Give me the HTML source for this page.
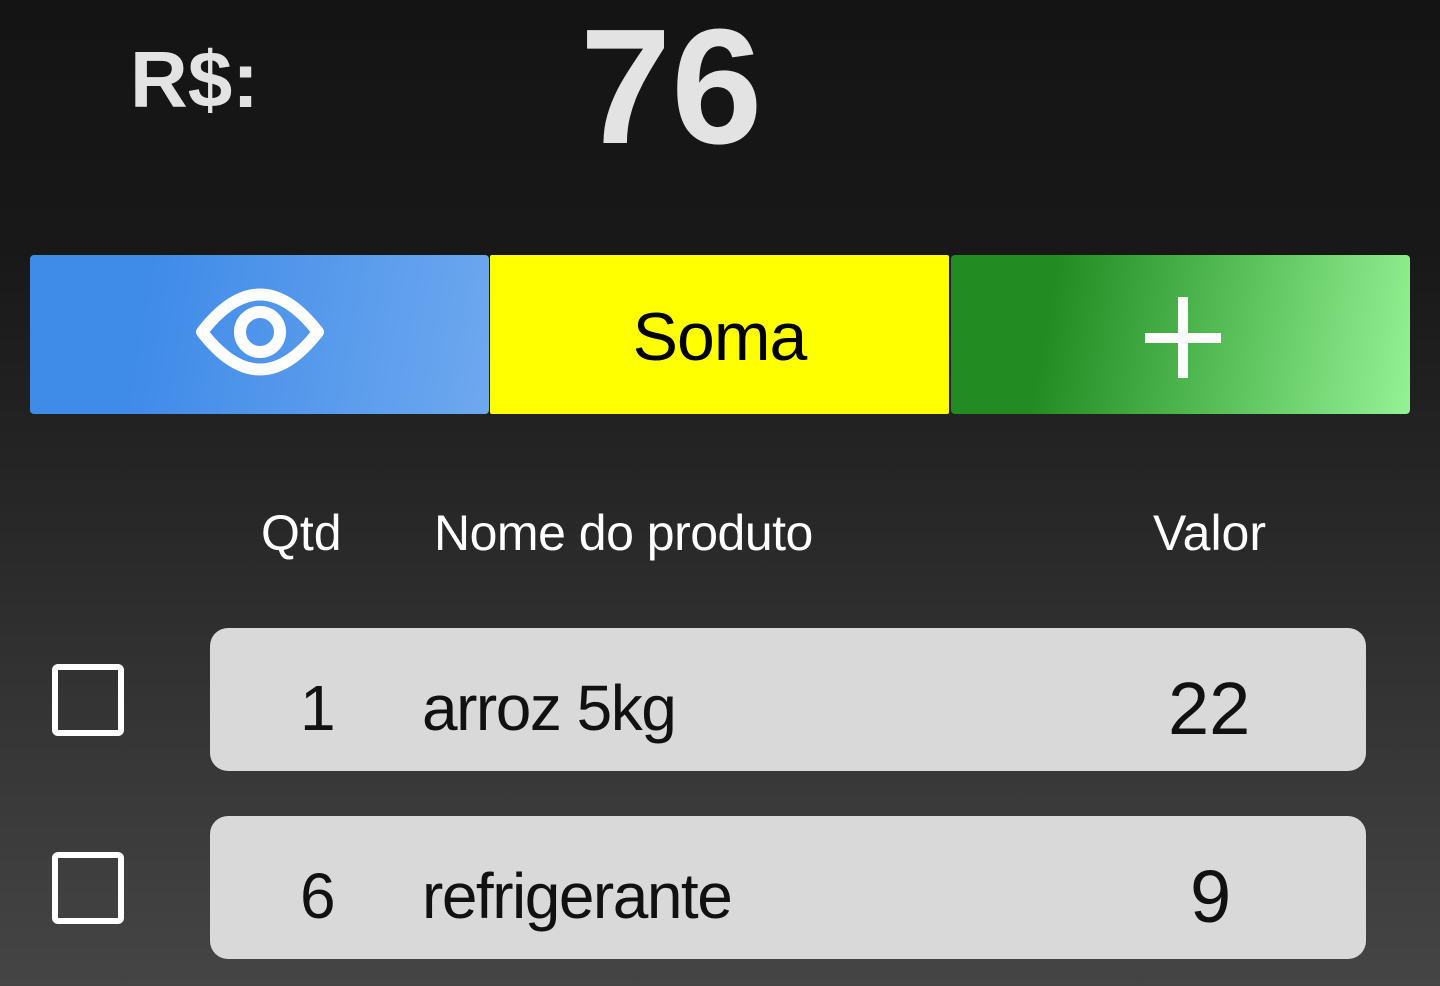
<!DOCTYPE html>
<html><head><style>
html,body{margin:0;padding:0}
body{width:1440px;height:986px;overflow:hidden;position:relative;background:linear-gradient(180deg,#141414 0%,#181818 25%,#262626 50%,#333 70%,#454545 100%);font-family:"Liberation Sans",sans-serif;}
.a{position:absolute}
.btn{position:absolute;top:255px;height:159px;border-radius:4px}
.row{position:absolute;left:210px;width:1156px;height:143px;background:#d9d9d9;border-radius:18px;color:#111;font-size:64px}
.row span{position:absolute;top:48px;line-height:1}
.n{letter-spacing:-1.5px}
.cb{position:absolute;left:52px;width:60px;height:60px;border:6px solid #fff;border-radius:6px}
.h{position:absolute;top:508px;font-size:50px;color:#fff;line-height:1}
</style></head><body>
<div class="a" style="left:130px;top:40px;font-size:80px;font-weight:bold;color:#e3e3e3;line-height:1">R$:</div>
<div class="a" style="left:580px;top:5px;font-size:164px;font-weight:bold;color:#e3e3e3;line-height:1">76</div>
<div class="btn" style="left:30px;width:459px;background:linear-gradient(100deg,#3f8be8 25%,#6ea8ef 100%)">
<svg width="459" height="159" style="position:absolute;left:0;top:0"><path d="M172 77 Q230 2 288 77 Q230 152 172 77 Z" fill="none" stroke="#fff" stroke-width="12" stroke-linejoin="round"/><circle cx="230" cy="77" r="20" fill="none" stroke="#fff" stroke-width="12"/></svg>
</div>
<div class="btn" style="left:490px;width:459px;background:#ffff00;border-radius:2px"><div class="a" style="left:0;width:459px;top:48px;text-align:center;font-size:68px;color:#000;line-height:1;letter-spacing:-1px">Soma</div></div>
<div class="btn" style="left:951px;width:459px;background:linear-gradient(100deg,#228b22 22%,#5bc25b 62%,#94f294 100%)">
<div class="a" style="left:194px;top:78px;width:76px;height:10px;background:#fff"></div>
<div class="a" style="left:227px;top:42px;width:10px;height:81px;background:#fff"></div>
</div>
<div class="h" style="left:261px">Qtd</div>
<div class="h n" style="left:434px;letter-spacing:-0.5px">Nome do produto</div>
<div class="h" style="left:1153px">Valor</div>
<div class="cb" style="top:664px"></div>
<div class="row" style="top:628px"><span style="left:90px">1</span><span class="n" style="left:212px">arroz 5kg</span><span style="left:958px;font-size:74px;top:44px">22</span></div>
<div class="cb" style="top:852px"></div>
<div class="row" style="top:816px"><span style="left:90px">6</span><span class="n" style="left:212px">refrigerante</span><span style="left:980px;font-size:74px;top:44px">9</span></div>
</body></html>
